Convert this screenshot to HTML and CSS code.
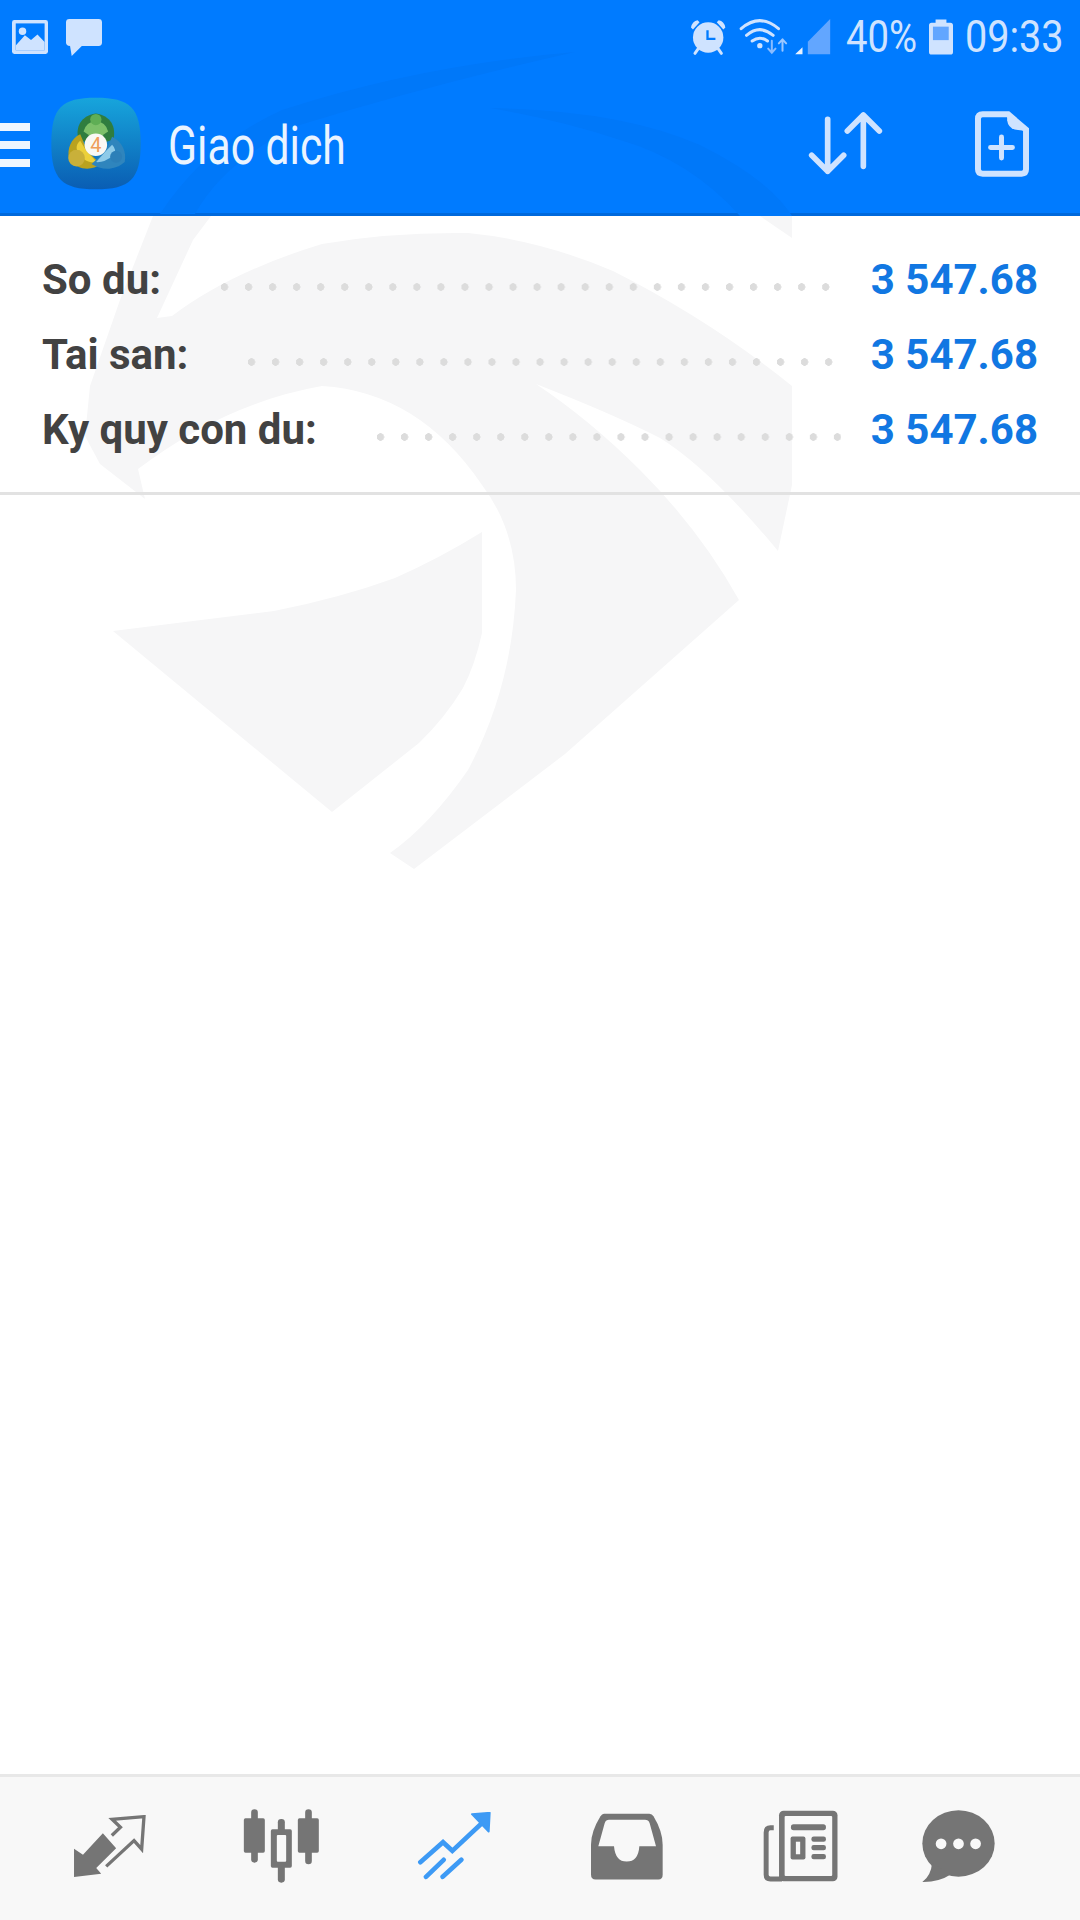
FILE: index.html
```html
<!DOCTYPE html>
<html lang="en">
<head>
  <meta charset="UTF-8" />
  <meta name="viewport" content="width=device-width, initial-scale=1" />
  <title>Giao dich</title>
  <link rel="stylesheet" href="styles.css">
</head>
<body>
  <div class="screen">
    <!-- Faint logo behind the page -->
    <svg class="watermark" viewBox="0 216 1080 700" width="1080" height="700">
      <path d="M153 216 L120 300 L90 386 L85 436 L100 464 L145 499 L138 469 Q225 403 322 386 Q419 392 482 485 Q516 530 516 590 Q512 688 468 770 Q430 825 390 853 L414 869 L565 754 L739 600 Q700 530 640 470 Q590 420 536 384 Q613 414 660 438 Q710 469 778 551 L792 485 L792 386 Q710 320 613 271 Q540 240 468 233 Q390 232 322 244 Q230 272 172 316 L157 318 L193 240 L211 216 Z" />
      <path d="M113 631 Q200 620 274 611 Q340 598 395 578 Q440 558 482 532 L482 633 Q475 665 463 688 Q445 718 419 743 L332 812 Z" />
      <path d="M760 216 H792 V238 Z" />
    </svg>

    <header class="topbar">
      <svg class="streaks" viewBox="0 0 1080 216" width="1080" height="216">
        <path d="M160 214 Q205 145 282 110 Q420 65 575 52 Q430 85 300 125 Q225 160 195 214 Z" />
        <path d="M490 108 Q620 110 700 145 Q770 180 792 216 H740 Q690 160 620 140 Q560 120 490 108 Z" />
      </svg>

      <div class="status">
        <svg class="ic ic-image" viewBox="37 57 106 100" width="36" height="34">
          <rect class="light" x="37" y="57" width="106" height="100" rx="7" />
          <rect class="blue" x="48" y="67" width="85" height="79" />
          <circle class="light" cx="68" cy="90" r="11" />
          <path class="light" d="M48 132 L75 102 L93 116 L112 100 L133 122 V146 H48 Z" />
        </svg>
        <svg class="ic ic-bubble" viewBox="198 55 107 110" width="36" height="37">
          <path class="light" d="M208 55 H295 Q305 55 305 65 V125 Q305 135 295 135 H245 L215 165 L210 135 Q198 135 198 125 V65 Q198 55 208 55 Z" />
        </svg>

        <div class="status-right">
          <svg class="ic ic-alarm" viewBox="35 52 112 112" width="37" height="37">
            <circle class="light" cx="90" cy="108" r="46" />
            <path class="light" d="M38 78 Q42 58 58 56 L64 62 L44 84 Z M142 78 Q138 58 122 56 L116 62 L136 84 Z" />
            <path class="line-light" d="M60 142 L50 156 M120 142 L130 156" />
            <path class="line-blue" d="M88 86 V112 H112" />
          </svg>
          <svg class="ic ic-wifi" viewBox="185 48 146 114" width="49" height="38">
            <path class="line-light" d="M191 80 Q247 32 303 80 M207 100 Q247 66 287 100 M224 117 Q247 100 270 117" />
            <circle class="light" cx="247" cy="131" r="8" />
            <path class="line-mid" d="M283 116 V150 M272 140 L283 152 L294 140" />
            <path class="line-light-thin" d="M315 146 V114 M304 124 L315 112 L326 124" />
          </svg>
          <svg class="ic ic-signal" viewBox="350 52 107 108" width="36" height="36">
            <path class="white" d="M350 158 L372 137 V158 Z" />
            <path class="mid" d="M388 158 V120 L455 52 V158 Z" />
          </svg>
          <span class="status-text pct">40%</span>
          <svg class="ic ic-battery" viewBox="750 55 73 107" width="24" height="36">
            <path class="light" d="M770 55 H803 V65 H815 Q823 65 823 73 V154 Q823 162 815 162 H758 Q750 162 750 154 V73 Q750 65 758 65 H770 Z" />
            <rect class="mid" x="762" y="77" width="48" height="41" />
          </svg>
          <span class="status-text time">09:33</span>
        </div>
      </div>

      <div class="appbar">
        <div class="burger"><span></span><span></span><span></span></div>
        <svg class="logo" viewBox="150 288 275 280" width="92" height="93">
          <defs>
            <linearGradient id="logobg" x1="0" y1="0" x2="0" y2="1">
              <stop offset="0" stop-color="#17a5dc" />
              <stop offset="1" stop-color="#0a5db3" />
            </linearGradient>
          </defs>
          <path fill="url(#logobg)" d="M287 290 C390 290 422 320 422 428 C422 535 390 566 287 566 C184 566 153 535 153 428 C153 320 184 290 287 290 Z" />
          <path fill="#2f7d3f" d="M287 338 C240 345 226 380 234 416 L270 428 L304 428 L340 416 C348 380 334 345 287 338 Z" />
          <path fill="#7cc06a" d="M250 392 Q258 362 287 362 Q316 362 324 392 L305 405 H269 Z" />
          <circle fill="#5fae55" cx="287" cy="356" r="17" />
          <path fill="#b9a21f" d="M240 400 C212 412 200 445 206 474 C235 512 275 510 302 490 L262 452 Z" />
          <path fill="#ecd03a" d="M240 420 C226 432 222 450 250 474 C262 484 278 488 290 484 L258 450 Z" />
          <circle fill="#c9b03a" cx="229" cy="472" r="25" />
          <path fill="#2f85bd" d="M336 408 C368 424 380 455 374 484 C345 510 305 510 274 490 L318 450 Z" />
          <path fill="#8ecbe9" d="M336 432 Q352 448 340 464 Q312 486 288 484 L318 450 Z" />
          <circle fill="#2c7fb8" cx="348" cy="468" r="18" />
          <circle fill="#f8f8f4" cx="287" cy="432" r="34" />
          <text class="logo-four" x="287" y="453" text-anchor="middle">4</text>
        </svg>
        <h1 class="title">Giao dich</h1>
        <svg class="ic ic-sort" viewBox="385 335 225 195" width="75" height="65">
          <path d="M444 360 V516 M396 468 L444 516 L492 468 M551 501 V347 M503 395 L551 347 L599 395" />
        </svg>
        <svg class="ic ic-newdoc" viewBox="885 333 163 197" width="54" height="66">
          <path class="doc" d="M908 342 H985 L1039 388 V508 Q1039 521 1026 521 H908 Q894 521 894 508 V356 Q894 342 908 342 Z" />
          <path class="light" d="M982 342 L1040 392 L1005 388 Q985 382 982 360 Z" />
          <path class="doc-plus" d="M965 410 V474 M932 442 H998" />
        </svg>
      </div>
    </header>

    <main class="content">
      <section class="summary">
        <div class="row">
          <span class="label">So du:</span>
          <span class="leader"></span>
          <span class="value">3 547.68</span>
        </div>
        <div class="row">
          <span class="label">Tai san:</span>
          <span class="leader"></span>
          <span class="value">3 547.68</span>
        </div>
        <div class="row">
          <span class="label">Ky quy con du:</span>
          <span class="leader"></span>
          <span class="value">3 547.68</span>
        </div>
      </section>
    </main>

    <nav class="tabs">
      <svg class="tab" viewBox="100 135 220 190" width="73" height="63">
        <path class="tab-fill" d="M103 237 V322 L185 312 L170 295 L230 235 L190 190 L130 255 Z" />
        <path class="tab-line" d="M217 197 L243 172 L218 148 L314 140 L307 238 L284 212 L200 290" />
      </svg>
      <svg class="tab" viewBox="610 117 230 222" width="77" height="74">
        <rect class="tab-fill" x="634" y="118" width="20" height="160" rx="10" />
        <rect class="tab-fill" x="612" y="145" width="63" height="103" rx="5" />
        <rect class="tab-fill" x="796" y="118" width="20" height="165" rx="10" />
        <rect class="tab-fill" x="774" y="145" width="63" height="103" rx="5" />
        <rect class="tab-fill" x="714" y="147" width="21" height="191" rx="10" />
        <rect class="tab-fill" x="693" y="178" width="63" height="115" rx="5" />
        <rect class="tab-hole" x="711" y="195" width="28" height="80" rx="3" />
      </svg>
      <svg class="tab tab-active" viewBox="1130 122 225 203" width="75" height="68">
        <path class="tab-stroke" d="M1140 272 L1208 212 L1236 238 L1330 150 M1157 316 L1210 265 M1207 316 L1263 265" />
        <path class="tab-head" d="M1295 128 L1348 124 L1345 180 Z" />
      </svg>
      <svg class="tab tab-inbox" viewBox="153 125 216 200" width="72" height="67">
        <path class="tab-fill" d="M192 127 H328 Q336 127 341 135 Q368 180 368 220 V310 Q368 324 355 324 H167 Q153 324 153 310 V220 Q153 180 181 135 Q186 127 192 127 Z" />
        <path class="tab-hole" d="M207 145 H315 Q325 145 329 155 L348 224 H298 Q295 270 260 270 Q226 270 222 224 H175 L194 155 Q198 145 207 145 Z" />
      </svg>
      <svg class="tab tab-news" viewBox="668 116 226 218" width="75" height="72">
        <rect class="tab-fill" x="716" y="118" width="177" height="214" rx="14" />
        <rect class="tab-hole" x="733" y="134" width="144" height="182" rx="3" />
        <path class="tab-line-wide" d="M700 170 H690 Q677 170 677 184 V312 Q677 325 690 325 H725" />
        <rect class="tab-fill" x="752" y="159" width="106" height="18" rx="8" />
        <rect class="tab-fill" x="751" y="196" width="45" height="70" rx="6" />
        <rect class="tab-hole" x="767" y="212" width="13" height="38" />
        <rect class="tab-fill" x="814" y="196" width="44" height="16" rx="7" />
        <rect class="tab-fill" x="814" y="222" width="44" height="16" rx="7" />
        <rect class="tab-fill" x="814" y="249" width="44" height="16" rx="7" />
      </svg>
      <svg class="tab tab-last" viewBox="1145 116 218 218" width="73" height="73">
        <ellipse class="tab-fill" cx="1254" cy="216" rx="108" ry="99" />
        <path class="tab-fill" d="M1175 275 Q1172 312 1146 331 Q1195 332 1232 308 Z" />
        <circle class="tab-hole" cx="1202" cy="217" r="16" />
        <circle class="tab-hole" cx="1254" cy="217" r="16" />
        <circle class="tab-hole" cx="1305" cy="217" r="16" />
      </svg>
    </nav>
  </div>
</body>
</html>
```

FILE: styles.css
```css
body {
  margin: 0;
  background: #fff;
  font-family: Roboto, Arial, sans-serif;
}

.screen {
  position: relative;
  width: 1080px;
  height: 1920px;
  display: flex;
  flex-direction: column;
  overflow: hidden;
}

.watermark {
  position: absolute;
  left: 0;
  top: 216px;
  fill: #f6f6f7;
}

.ic {
  display: block;
  flex: none;
}

/* Top bar */
.topbar {
  position: relative;
  height: 216px;
  box-sizing: border-box;
  background: #007bff;
  border-bottom: 3px solid #0069dc;
}

.streaks {
  position: absolute;
  left: 0;
  top: 0;
  fill: #0078f9;
}

.status {
  position: relative;
  height: 74px;
  display: flex;
  align-items: center;
  padding: 0 0 0 12px;
}

.ic-bubble {
  margin-left: 18px;
}

.status-right {
  margin-left: auto;
  display: flex;
  align-items: center;
}

.ic-wifi {
  margin-left: 12px;
}

.ic-signal {
  margin-left: 7px;
}

.ic-battery {
  margin-left: 13px;
}

.status-text {
  display: block;
  font-size: 44px;
  line-height: 74px;
  color: #cfe3ff;
  transform: scaleX(0.87);
  transform-origin: left center;
}

.pct {
  width: 70px;
  margin-left: 15px;
}

.time {
  width: 95px;
  margin: 0 20px 0 12px;
  transform: scaleX(0.9);
}

.light { fill: #cfe3ff; }
.blue { fill: #007bff; }
.mid { fill: #62a6ff; }
.white { fill: #e8f2ff; }

.line-light, .line-blue, .line-mid, .line-light-thin {
  fill: none;
  stroke-linecap: round;
}

.line-light { stroke: #cfe3ff; stroke-width: 9; }
.line-light-thin { stroke: #9cc7ff; stroke-width: 6; stroke-linejoin: round; }
.line-mid { stroke: #8abcff; stroke-width: 6; }
.line-blue { stroke: #007bff; stroke-width: 7; stroke-linecap: butt; }

.appbar {
  position: relative;
  height: 139px;
  display: flex;
  align-items: center;
}

.burger {
  width: 30px;
  display: flex;
  flex-direction: column;
  gap: 10px;
  margin-top: 2px;
}

.burger span {
  display: block;
  height: 8px;
  background: #eef6ff;
}

.logo {
  display: block;
  margin-left: 20px;
  margin-bottom: 1px;
  flex: none;
}

.logo-four {
  font-family: Roboto, Arial, sans-serif;
  font-size: 60px;
  fill: #ee9d5a;
}

.title {
  margin: 4px 0 0 26px;
  width: 176px;
  font-size: 54px;
  font-weight: 400;
  color: #eaf4ff;
  white-space: nowrap;
  transform: scaleX(0.79);
  transform-origin: left center;
}

.ic-sort {
  margin-left: 464px;
  fill: none;
  stroke: #cfe3ff;
  stroke-width: 17;
  stroke-linecap: round;
  stroke-linejoin: round;
}

.ic-newdoc {
  margin-left: 92px;
}

.doc {
  fill: none;
  stroke: #cfe3ff;
  stroke-width: 18;
}

.doc-plus {
  fill: none;
  stroke: #cfe3ff;
  stroke-width: 15;
  stroke-linecap: round;
}

/* Balance rows */
.content {
  position: relative;
  flex: 1;
}

.summary {
  padding: 26px 42px 25px;
  border-bottom: 3px solid #e2e2e2;
}

.row {
  display: flex;
  height: 75px;
  line-height: 75px;
  font-size: 42px;
  font-weight: 700;
}

.label {
  color: #424242;
  white-space: nowrap;
}

.leader {
  flex: 1;
  margin: 0 30px 0 60px;
  background-image: radial-gradient(circle at 3.5px 45px, #dcdcdc 3.5px, transparent 4px);
  background-size: 24.05px 75px;
  background-repeat: repeat-x;
}

.value {
  color: #1177e2;
  white-space: nowrap;
}

/* Bottom tabs */
.tabs {
  height: 146px;
  box-sizing: border-box;
  display: flex;
  align-items: center;
  gap: 97px;
  padding: 0 0 5px 73px;
  background: #f8f8f8;
  border-top: 3px solid #e8e8e8;
}

.tab {
  display: block;
  flex: none;
}

.tab-inbox {
  margin-left: 2px;
}

.tab-news {
  margin-left: 3px;
}

.tab-last {
  margin-left: -13px;
}

.tab-fill { fill: #757575; }
.tab-hole { fill: #f8f8f8; }

.tab-line {
  fill: none;
  stroke: #757575;
  stroke-width: 10;
}

.tab-line-wide {
  fill: none;
  stroke: #757575;
  stroke-width: 15;
}

.tab-stroke {
  fill: none;
  stroke: #3d9af5;
  stroke-width: 14;
  stroke-linecap: round;
  stroke-linejoin: miter;
}

.tab-head {
  fill: #3d9af5;
  stroke: #3d9af5;
  stroke-width: 6;
  stroke-linejoin: round;
}
```
